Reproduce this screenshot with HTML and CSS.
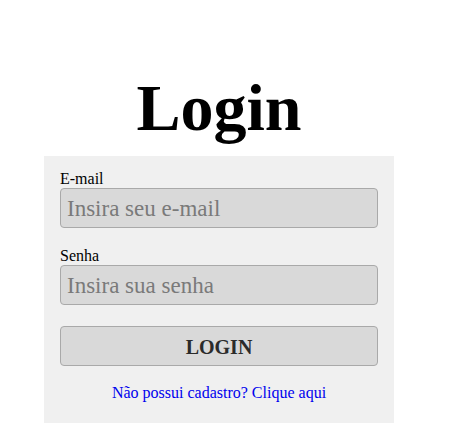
FILE: index.html
```html
<!DOCTYPE html>
<html lang="pt-BR">
<head>
<meta charset="utf-8">
<title>Login</title>
<link rel="stylesheet" href="styles.css">
</head>
<body>
<main class="page">
  <h1 class="title">Login</h1>
  <form class="card">
    <label class="label" for="email">E-mail</label>
    <input class="field" id="email" type="email" placeholder="Insira seu e-mail">
    <label class="label" for="senha">Senha</label>
    <input class="field" id="senha" type="password" placeholder="Insira sua senha">
    <button class="btn" type="button">LOGIN</button>
    <a class="link" href="#">Não possui cadastro? Clique aqui</a>
  </form>
</main>
</body>
</html>
```
FILE: styles.css
```css
html, body {
  margin: 0;
  padding: 0;
  background: #ffffff;
}
body {
  font-family: "Liberation Serif", "Times New Roman", serif;
  font-size: 16px;
  color: #000;
}
.page {
  display: flex;
  flex-direction: column;
  align-items: center;
  padding: 75px 16px 0 0;
}
.title {
  margin: 0 0 15px 0;
  font-size: 66px;
  line-height: 66px;
  font-weight: bold;
}
.card {
  box-sizing: border-box;
  width: 350px;
  background: #f0f0f0;
  padding: 14px 16px 21px 16px;
  display: flex;
  flex-direction: column;
}
.label {
  display: block;
  line-height: 18px;
}
.field {
  box-sizing: border-box;
  height: 40px;
  margin: 0 0 19px 0;
  padding: 2px 6px 0 6px;
  border: 1px solid #a9a9a9;
  border-radius: 4px;
  background: #d9d9d9;
  font-family: "Liberation Serif", "Times New Roman", serif;
  font-size: 23px;
  color: #333;
  outline: none;
}
.field::placeholder {
  color: #7a7a7a;
}
#senha {
  margin-bottom: 21px;
}
.btn {
  box-sizing: border-box;
  height: 40px;
  border: 1px solid #a9a9a9;
  border-radius: 4px;
  background: #d9d9d9;
  font-family: "Liberation Serif", "Times New Roman", serif;
  font-size: 20px;
  font-weight: bold;
  color: #2b2b2b;
  padding: 3px 0 0 0;
}
.link {
  margin-top: 18px;
  text-align: center;
  color: #0000ee;
  text-decoration: none;
  line-height: 18px;
}
```
